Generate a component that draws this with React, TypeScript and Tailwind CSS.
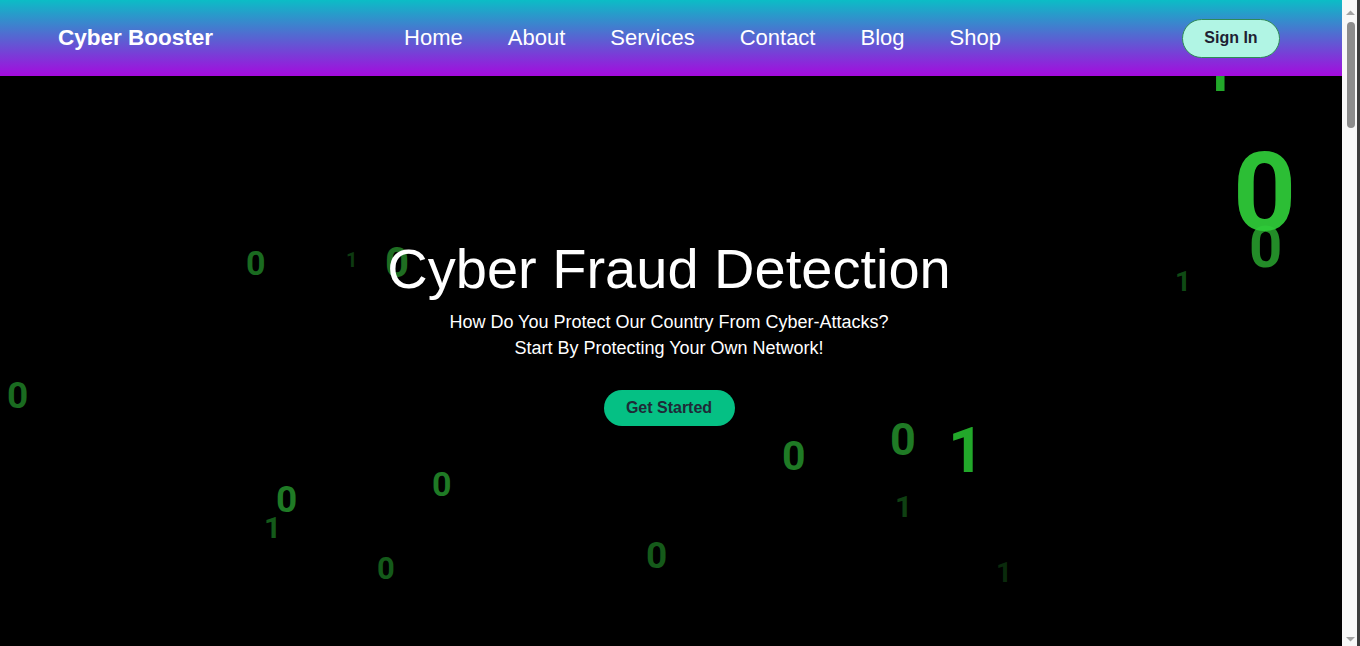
const digits = [
  { v: "1", s: 60, x: 1201, y: -35, c: "#22a82a" },
  { v: "0", s: 58, x: 1249, y: 142, c: "#238c28" },
  { v: "0", s: 110, x: 1233, y: 62, c: "rgba(48,206,58,0.92)" },
  { v: "1", s: 28, x: 1175, y: 192, c: "#0f4a14" },
  { v: "0", s: 34, x: 246, y: 170, c: "#1a6b20" },
  { v: "1", s: 20, x: 346, y: 174, c: "#0d3a10" },
  { v: "0", s: 42, x: 385, y: 166, c: "#1f6e22" },
  { v: "0", s: 37, x: 7, y: 301, c: "#1a6b20" },
  { v: "0", s: 37, x: 276, y: 405, c: "#1f7a25" },
  { v: "1", s: 30, x: 264, y: 437, c: "#145a1a" },
  { v: "0", s: 34, x: 432, y: 391, c: "#1f7a25" },
  { v: "0", s: 31, x: 377, y: 477, c: "#145a1a" },
  { v: "0", s: 37, x: 646, y: 461, c: "#155a1a" },
  { v: "0", s: 41, x: 782, y: 360, c: "#1f7a25" },
  { v: "0", s: 45, x: 890, y: 341, c: "#1f7a25" },
  { v: "1", s: 63, x: 948, y: 343, c: "#22a82a" },
  { v: "1", s: 30, x: 895, y: 416, c: "#0f4012" },
  { v: "1", s: 28, x: 996, y: 483, c: "#0a2a0c" },
];

const Navbar = () => {
  return (
    <header className="relative z-10 flex h-[76px] items-center justify-between bg-linear-to-b/srgb from-[#0bbdc6] to-[#a50ade] pl-[58px] pr-[62px] font-['Liberation_Sans',Arial,sans-serif] text-white">
      <h1 className="text-[22.5px] font-bold">Cyber Booster</h1>
      <nav className="mb-[2px] ml-[10px] flex gap-[45px] text-[22px]">
        <a href="#">Home</a>
        <a href="#">About</a>
        <a href="#">Services</a>
        <a href="#">Contact</a>
        <a href="#">Blog</a>
        <a href="#">Shop</a>
      </nav>
      <button className="h-[39px] w-[98px] rounded-full border border-[#2e8b57] bg-[#b1f5e4] text-[16px] font-semibold text-[#1f1f33]">
        Sign In
      </button>
    </header>
  );
};

const Hero = () => {
  return (
    <section className="relative h-[570px] overflow-hidden bg-black font-['Liberation_Sans',Arial,sans-serif]">
      {digits.map((d, i) => (
        <span
          key={i}
          className="absolute font-['Roboto',sans-serif] font-bold leading-none"
          style={{ left: d.x, top: d.y, fontSize: d.s, color: d.c }}
        >
          {d.v}
        </span>
      ))}
      <div className="relative flex flex-col items-center pr-[4px] pt-[161px] text-center text-white">
        <h2 className="text-[56px] leading-[64px]">Cyber Fraud Detection</h2>
        <p className="mt-[8px] text-[18px] leading-[26px]">
          How Do You Protect Our Country From Cyber-Attacks?
          <br />
          Start By Protecting Your Own Network!
        </p>
        <button className="mt-[29px] h-[36px] w-[131px] rounded-full bg-[#05c084] text-[16px] font-semibold text-[#1f2a37]">
          Get Started
        </button>
      </div>
    </section>
  );
};

// page scrollbar strip, as in the reference
const ScrollBar = () => {
  return (
    <aside className="sticky top-0 flex h-screen w-[18px] shrink-0 bg-[#f8f8f8]">
      <div className="flex w-[15px] flex-col items-center pl-[2px]">
        <svg width="9" height="6" viewBox="0 0 9 6" className="mt-[10px]">
          <path d="M0 5 L4.5 0.5 L9 5 Z" fill="#a3a3a3" />
        </svg>
        <div className="mt-[6px] h-[106px] w-[8px] rounded-full bg-[#8c8c8c]" />
        <svg width="9" height="6" viewBox="0 0 9 6" className="mb-[4px] mt-auto">
          <path d="M0 1 L4.5 5.5 L9 1 Z" fill="#a3a3a3" />
        </svg>
      </div>
      <div className="w-[3px] bg-[#3c3c3c]" />
    </aside>
  );
};

export default function App() {
  return (
    <div className="flex h-screen overflow-hidden bg-black">
      <main className="min-w-0 flex-1">
        <Navbar />
        <Hero />
      </main>
      <ScrollBar />
    </div>
  );
}
